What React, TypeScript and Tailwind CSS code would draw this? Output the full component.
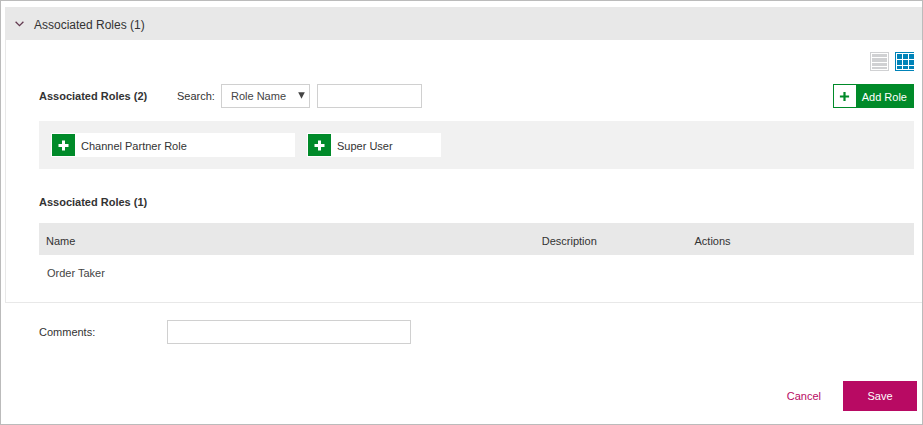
import React, { useState } from 'react';

interface Role {
  id: number;
  name: string;
  description?: string;
  className?: string;
}

type View = 'list' | 'grid';

const availableRoles: Role[] = [
  { id: 1, name: 'Channel Partner Role', className: 'w-[244px]' },
  { id: 2, name: 'Super User', className: 'w-[134px]' },
];

const assignedRoles: Role[] = [{ id: 3, name: 'Order Taker' }];

const fieldClasses = 'h-6 border border-[#d0d0d0] bg-white text-[#444] outline-none focus:border-[#0083b8]';

const PlusIcon: React.FC<{ thin?: boolean }> = ({ thin = false }) => (
  <svg width="11" height="11" viewBox="0 0 11 11" fill="currentColor" aria-hidden="true">
    {thin ? (
      <path d="M4.4 0.9h2.2v3.5h3.5v2.2H6.6v3.5H4.4V6.6H0.9V4.4h3.5z" />
    ) : (
      <path d="M4 0.5h3v3.5h3.5v3H7v3.5H4V7H0.5V4H4z" />
    )}
  </svg>
);

const ListIcon: React.FC = () => (
  <svg width="19" height="19" viewBox="0 0 19 19" aria-hidden="true" shapeRendering="crispEdges">
    <rect width="19" height="19" fill="#d0d1d3" />
    <rect x="1" y="1" width="17" height="17" fill="#fff" />
    <path fill="#d0d1d3" d="M2 2h15v3H2zM2 6h15v4H2zM2 11h15v3H2zM2 15h15v2H2z" />
  </svg>
);

const GridIcon: React.FC = () => (
  <svg width="19" height="19" viewBox="0 0 19 19" aria-hidden="true" shapeRendering="crispEdges">
    <rect width="19" height="19" fill="#0083b8" />
    <rect x="1" y="1" width="18" height="17" fill="#fff" />
    <path
      fill="#0083b8"
      d="M2 2h5v5H2zM8 2h5v5H8zM14 2h5v5h-5zM2 8h5v5H2zM8 8h5v5H8zM14 8h5v5h-5zM2 14h5v3H2zM8 14h5v3H8zM14 14h5v3h-5z"
    />
  </svg>
);

const RoleChip: React.FC<{ role: Role }> = ({ role }) => (
  <div className={`flex h-6 items-center bg-white pl-px ${role.className ?? ''}`}>
    <button
      type="button"
      aria-label={`Add ${role.name}`}
      className="flex h-[22px] w-[23px] items-center justify-center bg-[#008a29] text-white"
    >
      <PlusIcon />
    </button>
    <span className="pt-0.5 pl-1.5">{role.name}</span>
  </div>
);

const App: React.FC = () => {
  const [open, setOpen] = useState(true);
  const [view, setView] = useState<View>('grid');

  return (
    <div className="border border-[#bbb] bg-white pt-1.5 pb-[13px] pl-1 font-['Liberation_Sans',Arial,sans-serif] text-[11px] leading-4 text-[#333]">
      <button
        type="button"
        aria-expanded={open}
        onClick={() => setOpen(!open)}
        className="flex h-[33px] w-full items-center bg-[#e8e8e8] pl-[10px] text-[12px]"
      >
        <svg width="9" height="6" viewBox="0 0 9 6" fill="none" stroke="#633a50" strokeWidth="1.3" aria-hidden="true">
          <path d="M0.6 0.8L4.5 4.7L8.4 0.8" />
        </svg>
        <span className="pt-0.5 pl-[10px]">Associated Roles (1)</span>
      </button>

      {open && (
        <section className="border-b border-l border-[#e8e8e8] pt-3 pr-2 pb-3 pl-[33px]">
          <div className="flex justify-end gap-1.5">
            <button type="button" aria-label="List view" aria-pressed={view === 'list'} onClick={() => setView('list')}>
              <ListIcon />
            </button>
            <button type="button" aria-label="Grid view" aria-pressed={view === 'grid'} onClick={() => setView('grid')}>
              <GridIcon />
            </button>
          </div>

          {/* Search toolbar */}
          <div className="mt-[13px] flex h-6 items-center">
            <h2 className="w-[138px] font-bold">Associated Roles (2)</h2>
            <label htmlFor="search-by" className="w-11">
              Search:
            </label>
            <div className="relative">
              <select id="search-by" className={`${fieldClasses} block w-[89px] appearance-none pl-[9px]`}>
                <option>Role Name</option>
              </select>
              <svg
                width="7"
                height="7"
                viewBox="0 0 7 7"
                fill="#444"
                aria-hidden="true"
                className="pointer-events-none absolute top-2 right-[5px]"
              >
                <path d="M0.2 0.3h6.6L3.5 6.8z" />
              </svg>
            </div>
            <input type="text" aria-label="Search text" className={`${fieldClasses} ml-[7px] w-[105px] px-2`} />
            <button type="button" className="ml-auto flex h-6 border border-[#008a29] bg-[#008a29] text-white">
              <span className="flex h-full w-[22px] items-center justify-center bg-white text-[#008a29]">
                <PlusIcon thin />
              </span>
              <span className="px-1.5 pt-1">Add Role</span>
            </button>
          </div>

          <div className="mt-[13px] flex gap-3 bg-[#f1f1f1] p-3">
            {availableRoles.map((role) => (
              <RoleChip key={role.id} role={role} />
            ))}
          </div>

          <h2 className="mt-[25px] mb-[13px] font-bold">Associated Roles (1)</h2>
          <table className="w-full table-fixed text-left">
            <thead>
              <tr className="h-8 bg-[#e8e8e8]">
                <th className="w-[57%] pt-1 pl-[7px] font-normal">Name</th>
                <th className="w-[17%] pt-1 pl-1 font-normal">Description</th>
                <th className="pt-1 pl-2 font-normal">Actions</th>
              </tr>
            </thead>
            <tbody>
              {assignedRoles.map((role) => (
                <tr key={role.id} className="h-[35px] text-[#444]">
                  <td className="pl-2">{role.name}</td>
                  <td>{role.description}</td>
                  <td />
                </tr>
              ))}
            </tbody>
          </table>
        </section>
      )}

      <div className="mt-[17px] flex items-center pl-[34px]">
        <label htmlFor="comments" className="w-32">
          Comments:
        </label>
        <input id="comments" type="text" className={`${fieldClasses} w-[244px] px-2`} />
      </div>

      <div className="mt-[37px] flex items-center justify-end gap-[22px] pr-[5px]">
        <button type="button" className="text-[#b80a63]">
          Cancel
        </button>
        <button type="button" className="h-[30px] w-[74px] bg-[#b80a63] text-white">
          Save
        </button>
      </div>
    </div>
  );
};

export default App;
